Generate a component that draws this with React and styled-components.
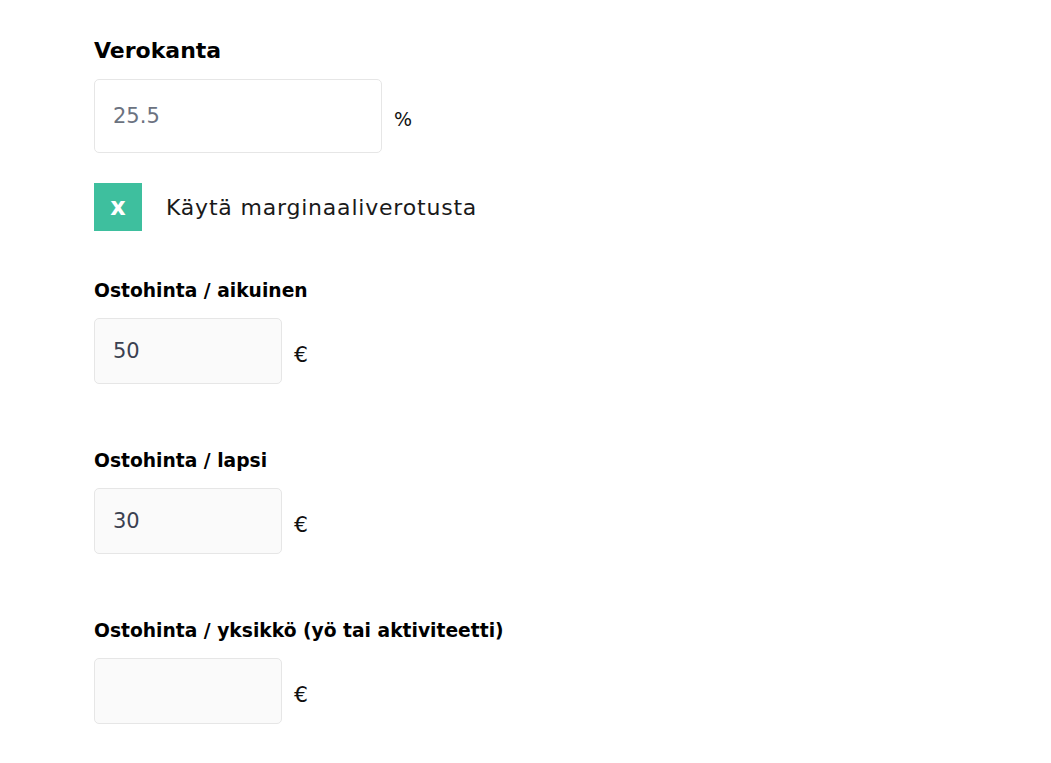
import React from 'react';
import styled, { createGlobalStyle } from 'styled-components';

const Global = createGlobalStyle`
  body {
    margin: 0;
    background: #ffffff;
    font-family: 'DejaVu Sans', 'Open Sans', sans-serif;
    color: #000;
  }
`;

const Page = styled.div`
  padding: 37px 94px 0;
  display: flex;
  flex-direction: column;
`;

const Heading = styled.h2`
  margin: 0 0 14px;
  font-size: 22px;
  font-weight: 700;
  line-height: 28px;
`;

const Label = styled.label`
  display: block;
  margin: 0 0 15px;
  font-size: 18.7px;
  font-weight: 700;
  line-height: 24px;
`;

const FieldRow = styled.div`
  display: flex;
  align-items: center;
  gap: 12px;
`;

const Input = styled.input`
  box-sizing: border-box;
  width: ${({ $wide }) => ($wide ? '288px' : '188px')};
  height: ${({ $wide }) => ($wide ? '74px' : '66px')};
  padding: 0 18px;
  border: 1px solid #e6e6e6;
  border-radius: 5px;
  background: ${({ $wide }) => ($wide ? '#ffffff' : '#fafafa')};
  font-family: inherit;
  font-size: 21px;
  color: #3a4151;
  outline: none;

  &::placeholder {
    color: #6b7280;
  }
`;

const Unit = styled.span`
  font-size: ${({ $big }) => ($big ? '22px' : '19px')};
  color: #111;
  margin-top: 6px;
`;

const CheckRow = styled.div`
  display: flex;
  align-items: center;
  gap: 24px;
  margin: 30px 0 48px;
`;

const CheckBox = styled.span`
  width: 48px;
  height: 48px;
  background: #3ebf9e;
  color: #fff;
  display: flex;
  align-items: center;
  justify-content: center;
  font-size: 24px;
  font-weight: 800;
`;

const CheckLabel = styled.span`
  font-size: 22px;
  font-weight: 400;
  letter-spacing: 0.8px;
  color: #1a1a1a;
`;

const Field = styled.div`
  margin-bottom: 65px;
`;

const fields = [
  { label: 'Ostohinta / aikuinen', value: '50' },
  { label: 'Ostohinta / lapsi', value: '30' },
  { label: 'Ostohinta / yksikkö (yö tai aktiviteetti)', value: '' },
];

const App = () => (
  <Page>
    <Global />
    <Heading>Verokanta</Heading>
    <FieldRow>
      <Input $wide placeholder="25.5" />
      <Unit>%</Unit>
    </FieldRow>
    <CheckRow>
      <CheckBox>x</CheckBox>
      <CheckLabel>Käytä marginaaliverotusta</CheckLabel>
    </CheckRow>
    {fields.map((f) => (
      <Field key={f.label}>
        <Label>{f.label}</Label>
        <FieldRow>
          <Input defaultValue={f.value} />
          <Unit $big>€</Unit>
        </FieldRow>
      </Field>
    ))}
  </Page>
);

export default App;
